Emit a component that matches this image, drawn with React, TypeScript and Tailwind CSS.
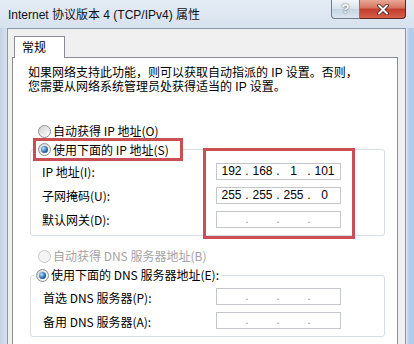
import { Fragment } from 'react';

function Radio({ checked, disabled }: { checked?: boolean; disabled?: boolean }) {
  return (
    <span
      className={`flex h-[13px] w-[13px] shrink-0 items-center justify-center rounded-full border ${
        disabled
          ? 'border-[#c9c9c9] bg-[#f4f4f4]'
          : 'border-[#8e8f8f] bg-[linear-gradient(135deg,#d2d2d2,#ffffff)]'
      }`}
    >
      {checked && (
        <span className="h-[7px] w-[7px] rounded-full bg-[radial-gradient(circle_at_35%_35%,#b9e4ff,#2b6cb2_55%,#0e3b70)]" />
      )}
    </span>
  );
}

function IpField({ parts }: { parts?: string[] }) {
  const segs = parts ?? ['', '', '', ''];
  return (
    <div className="flex h-[17px] w-[125px] shrink-0 items-center border border-[#c3c7cd] bg-white pl-[1px] font-['Liberation_Sans',sans-serif] text-[12px] text-black">
      {segs.map((p, i) => (
        <Fragment key={i}>
          <span className="w-[27px] text-center leading-[15px]">{p}</span>
          {i < 3 && (
            <span
              className={`w-[4px] text-center leading-[15px] ${
                parts ? 'text-black' : 'text-[#9a9a9a]'
              }`}
            >
              .
            </span>
          )}
        </Fragment>
      ))}
    </div>
  );
}

export default function App() {
  return (
    <div className="flex h-[344px] w-[414px] flex-col overflow-hidden bg-[#c6d6ea] font-['Noto_Sans_CJK_SC',sans-serif] text-[12px] text-black">
      {/* Title bar */}
      <div className="flex h-[28px] shrink-0 bg-[linear-gradient(#e4ecf5,#d7e2ef)]">
        <div className="flex flex-1 items-center pl-[8px] pt-[2px] font-['Liberation_Sans','Noto_Sans_CJK_SC',sans-serif] text-[12px] text-[#111]">
          Internet 协议版本 4 (TCP/IPv4) 属性
        </div>
        <div className="mr-[8px] flex h-[19px]">
          <div className="flex w-[29px] items-center justify-center rounded-bl-[4px] border border-t-0 border-[#6f7c8d] bg-[linear-gradient(#f2f6fa,#d9e2ed_50%,#c7d4e3_50%,#dbe5f0)] font-['Liberation_Sans',sans-serif] text-[13px] font-bold text-white [text-shadow:0_0_2px_#2a3340]">
            ?
          </div>
          <div className="flex w-[46px] items-center justify-center rounded-br-[4px] border border-l-0 border-t-0 border-[#5b2520] bg-[linear-gradient(#eaa796,#d3735e_45%,#c23c2c_50%,#d8604c)]">
            <svg width="12" height="11" viewBox="0 0 12 11">
              <path d="M2 1.5 L10 9.5 M10 1.5 L2 9.5" stroke="#4a1a14" strokeWidth="3.6" strokeLinecap="round" />
              <path d="M2 1.5 L10 9.5 M10 1.5 L2 9.5" stroke="#ffffff" strokeWidth="2" strokeLinecap="round" />
            </svg>
          </div>
        </div>
      </div>

      {/* Window body */}
      <div className="flex h-[340px] shrink-0">
        <div className="w-[7px] shrink-0 bg-[linear-gradient(90deg,#c3d2e4,#d6e1ee)]" />
        <div className="flex flex-1 flex-col border-l border-r border-t border-[#8b97a6] bg-[#f0f0f0] pl-[4px] pr-[7px] pt-[7px]">
          {/* Tab */}
          <div className="relative z-10 -mb-px ml-[2px] h-[22px] w-[51px] border border-b-0 border-[#898c95] bg-white pl-[7px] leading-[20px]">
            常规
          </div>

          {/* Panel */}
          <div className="flex flex-1 flex-col border border-[#898c95] bg-white pl-[15px] pt-[8px]">
            <div className="flex flex-col font-['Liberation_Sans','Noto_Sans_CJK_SC',sans-serif]">
              <div className="h-[14px] leading-[14px]">
                如果网络支持此功能，则可以获取自动指派的 IP 设置。否则，
              </div>
              <div className="h-[14px] leading-[14px]">
                您需要从网络系统管理员处获得适当的 IP 设置。
              </div>
            </div>

            <div className="ml-[10px] mt-[28px] flex h-[18px] items-center gap-[2px]">
              <Radio />
              <span>自动获得 IP 地址(O)</span>
            </div>

            <div className="relative z-10 ml-[5px] -mt-[2px] flex h-[23px] w-[150px] items-center gap-[2px] border-[3px] border-[#c94f52] bg-white pl-[2px]">
              <Radio checked />
              <span className="whitespace-nowrap">使用下面的 IP 地址(S)</span>
            </div>

            {/* IP group */}
            <div className="-mt-[12px] ml-[2px] flex h-[87px] w-[355px] shrink-0 items-start rounded-[3px] border border-[#d5dfe5]">
              <div className="flex w-[172px] shrink-0 flex-col pl-[11px] pt-[10px] leading-[24px]">
                <span>IP 地址(I):</span>
                <span>子网掩码(U):</span>
                <span>默认网关(D):</span>
              </div>
              <div className="relative z-20 -mt-[2px] flex h-[91px] w-[152px] shrink-0 flex-col gap-[7px] border-[3px] border-[#c94f52] pl-[10px] pt-[12px]">
                <IpField parts={['192', '168', '1', '101']} />
                <IpField parts={['255', '255', '255', '0']} />
                <IpField />
              </div>
            </div>

            <div className="ml-[10px] mt-[11px] flex h-[18px] items-center gap-[2px] text-[#a3a3a3]">
              <Radio disabled />
              <span>自动获得 DNS 服务器地址(B)</span>
            </div>

            <div className="relative z-10 ml-[6px] mt-[1px] flex h-[18px] w-fit items-center gap-[2px] bg-white px-[2px]">
              <Radio checked />
              <span className="whitespace-nowrap">使用下面的 DNS 服务器地址(E):</span>
            </div>

            {/* DNS group */}
            <div className="-mt-[9px] ml-[2px] flex h-[62px] w-[355px] shrink-0 items-start rounded-[3px] border border-[#d5dfe5]">
              <div className="flex w-[185px] shrink-0 flex-col pl-[12px] pt-[10px] leading-[24px]">
                <span>首选 DNS 服务器(P):</span>
                <span>备用 DNS 服务器(A):</span>
              </div>
              <div className="flex flex-col gap-[7px] pt-[12px]">
                <IpField />
                <IpField />
              </div>
            </div>
          </div>
        </div>
        <div className="w-[8px] shrink-0 bg-[linear-gradient(90deg,#dfe7f1,#b4cce8_40%)]" />
      </div>
    </div>
  );
}
